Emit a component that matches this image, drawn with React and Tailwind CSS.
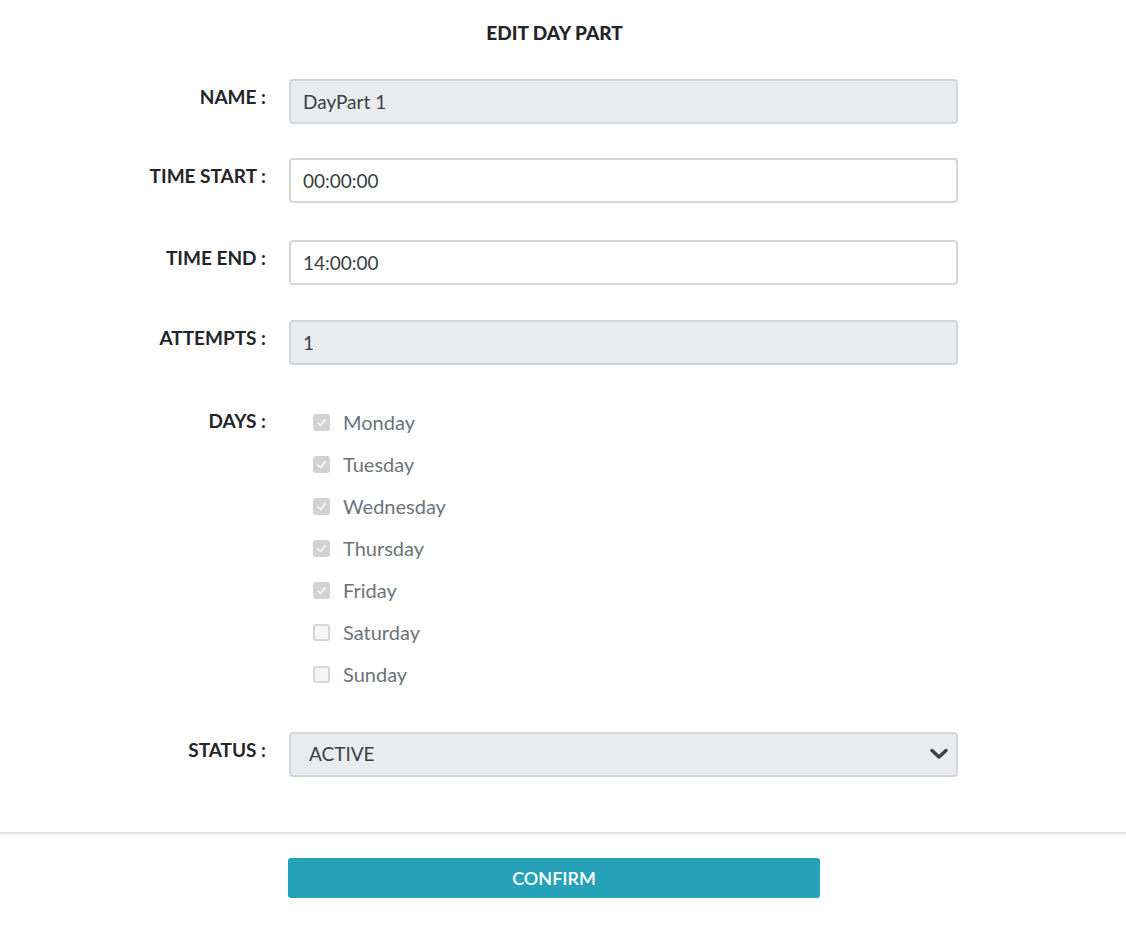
import React from "react";

const font = { fontFamily: "Lato, 'Noto Sans', sans-serif" };

function Label({ children }) {
  return (
    <div className="w-[266px] shrink-0 text-right text-[19px] font-bold leading-[22px] text-[#212529] pt-[7px]">
      {children}
    </div>
  );
}

function Field({ label, value, disabled }) {
  return (
    <div className="flex items-start">
      <Label>{label}</Label>
      <div className="ml-[23px] w-[669px]">
        <input
          readOnly
          value={value}
          className={`h-[45px] w-full rounded-[4px] border-2 border-[#d3d7db] px-[12px] text-[19px] text-[#3a3f44] outline-none ${
            disabled ? "bg-[#e9ecef]" : "bg-white"
          }`}
        />
      </div>
    </div>
  );
}

function Check({ checked }) {
  return (
    <span
      className={`flex h-[17px] w-[17px] items-center justify-center rounded-[3px] ${
        checked ? "bg-[#d2d2d2]" : "border-2 border-[#d6d6d6] bg-[#f5f5f5]"
      }`}
    >
      {checked && (
        <svg width="11" height="11" viewBox="0 0 12 12" fill="none">
          <path d="M2 6.5 L5 9.2 L10 2.8" stroke="#f4f4f4" strokeWidth="2" strokeLinecap="round" strokeLinejoin="round" />
        </svg>
      )}
    </span>
  );
}

export default function App() {
  const days = [
    ["Monday", true],
    ["Tuesday", true],
    ["Wednesday", true],
    ["Thursday", true],
    ["Friday", true],
    ["Saturday", false],
    ["Sunday", false],
  ];
  return (
    <div className="min-h-[938px] w-[1126px] bg-white" style={font}>
      <div className="w-[1109px] pt-[21px] text-center text-[19px] font-black leading-[24px] text-[#212529]">
        EDIT DAY PART
      </div>
      <div className="mt-[34px] flex flex-col">
        <Field label="NAME :" value="DayPart 1" disabled />
        <div className="mt-[34px]">
          <Field label="TIME START :" value="00:00:00" />
        </div>
        <div className="mt-[37px]">
          <Field label="TIME END :" value="14:00:00" />
        </div>
        <div className="mt-[35px]">
          <Field label="ATTEMPTS :" value="1" disabled />
        </div>
        <div className="mt-[45px] flex items-start">
          <div className="w-[266px] shrink-0 text-right text-[19px] font-bold leading-[22px] text-[#212529]">
            DAYS :
          </div>
          <div className="ml-[24px] flex flex-col gap-[18px] pl-[23px]">
            {days.map(([d, c]) => (
              <div key={d} className="flex h-[24px] items-center">
                <Check checked={c} />
                <span className="ml-[13px] text-[20px] leading-[24px] text-[#6c737b]">{d}</span>
              </div>
            ))}
          </div>
        </div>
        <div className="mt-[46px] flex items-start">
          <Label>STATUS :</Label>
          <div className="relative ml-[23px] w-[669px]">
            <div className="flex h-[45px] w-full items-center rounded-[4px] border-2 border-[#d3d7db] bg-[#e9ecef] px-[18px] text-[19px] text-[#3a3f44]">
              ACTIVE
            </div>
            <svg
              className="absolute right-[9px] top-[15px]"
              width="20"
              height="14"
              viewBox="0 0 20 14"
              fill="none"
            >
              <path d="M3 3.5 L10 10 L17 3.5" stroke="#3a3f44" strokeWidth="3.4" strokeLinecap="round" strokeLinejoin="round" />
            </svg>
          </div>
        </div>
      </div>
      <div className="mt-[55px] h-[2px] w-full bg-[#e3e3e3]" />
      <div className="mt-[24px] flex">
        <button className="ml-[288px] h-[40px] w-[532px] rounded-[3px] bg-[#26a2b8] text-[18px] font-semibold text-white">
          CONFIRM
        </button>
      </div>
    </div>
  );
}
